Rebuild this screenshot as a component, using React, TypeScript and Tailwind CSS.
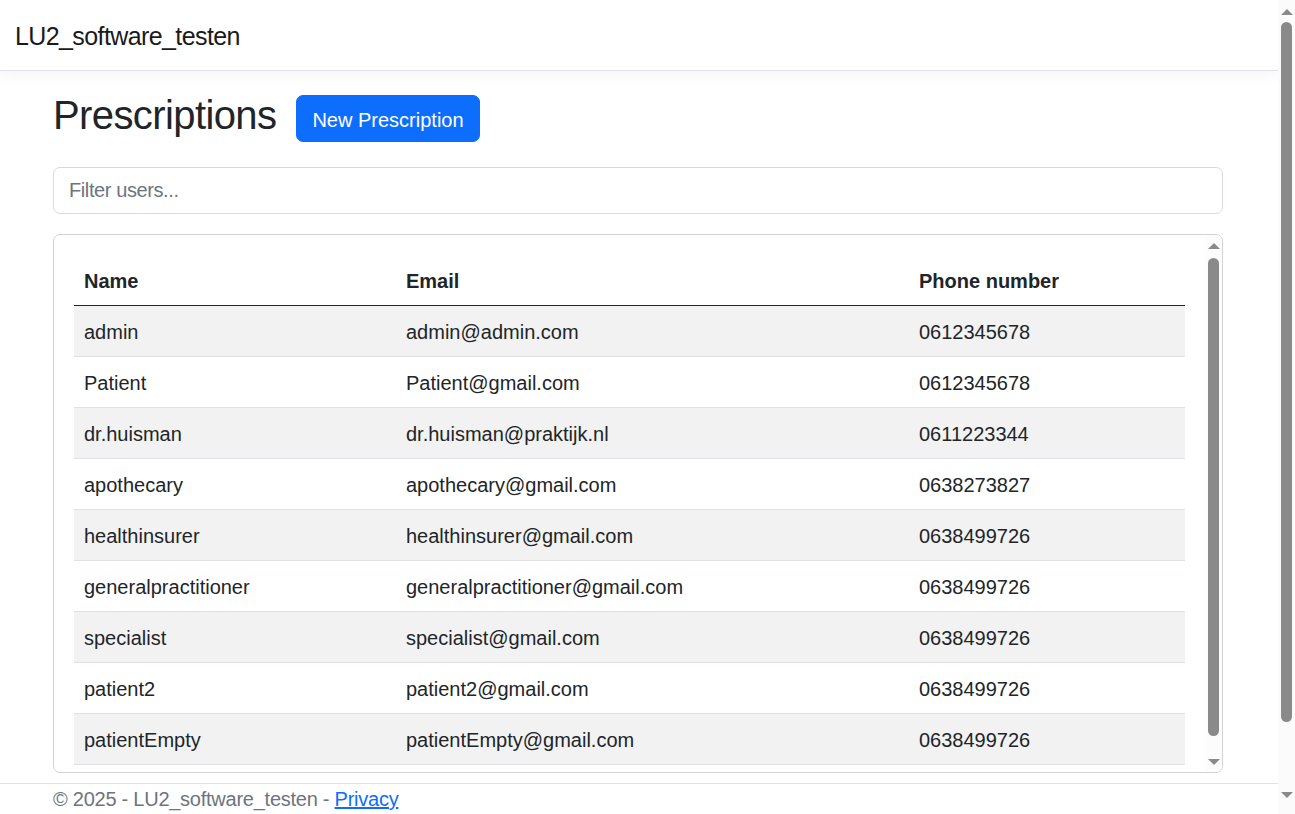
import React from "react";

interface IUser {
  name: string;
  email: string;
  phone: string;
}

const users: IUser[] = [
  { name: "admin", email: "admin@admin.com", phone: "0612345678" },
  { name: "Patient", email: "Patient@gmail.com", phone: "0612345678" },
  { name: "dr.huisman", email: "dr.huisman@praktijk.nl", phone: "0611223344" },
  { name: "apothecary", email: "apothecary@gmail.com", phone: "0638273827" },
  { name: "healthinsurer", email: "healthinsurer@gmail.com", phone: "0638499726" },
  { name: "generalpractitioner", email: "generalpractitioner@gmail.com", phone: "0638499726" },
  { name: "specialist", email: "specialist@gmail.com", phone: "0638499726" },
  { name: "patient2", email: "patient2@gmail.com", phone: "0638499726" },
  { name: "patientEmpty", email: "patientEmpty@gmail.com", phone: "0638499726" },
];

const ArrowUp = () => (
  <div className="w-0 h-0 border-l-[6px] border-r-[6px] border-b-[6px] border-l-transparent border-r-transparent border-b-[#8a8a8a]" />
);

const ArrowDown = () => (
  <div className="w-0 h-0 border-l-[6px] border-r-[6px] border-t-[6px] border-l-transparent border-r-transparent border-t-[#8a8a8a]" />
);

// windows style scrollbars (the browser doesn't draw its own here)
const PageScrollbar = () => (
  <div className="w-[17px] shrink-0 bg-[#fbfbfb] flex flex-col items-center">
    <div className="pt-[9px] h-[17px]">
      <ArrowUp />
    </div>
    <div className="mt-[5px] h-[700px] w-[11px] rounded-full bg-[#8a8a8a]" />
    <div className="mt-auto pb-[16px]">
      <ArrowDown />
    </div>
  </div>
);

const CardScrollbar = () => (
  <div className="w-[17px] shrink-0 bg-[#fcfcfc] flex flex-col items-center">
    <div className="pt-[8px]">
      <ArrowUp />
    </div>
    <div className="mt-[9px] h-[478px] w-[11px] rounded-full bg-[#8a8a8a]" />
    <div className="mt-auto pb-[7px]">
      <ArrowDown />
    </div>
  </div>
);

const App = () => {
  return (
    <div className="flex h-[814px] overflow-hidden bg-white text-[20px] text-[#212529] font-['Liberation_Sans',Arial,sans-serif]">
      <div className="flex-1 min-w-0">
        {/* Navbar */}
        <header className="h-[71px] flex items-center pt-[3px] px-[15px] border-b border-[#dee2e6] shadow-[0_5px_15px_rgba(0,0,0,0.04)]">
          <span className="text-[25px] tracking-[-0.6px] text-[#1a1a1a]">LU2_software_testen</span>
        </header>

        <main className="w-[1170px] ml-[53px] pt-5">
          {/* Title + button */}
          <div className="flex items-center gap-5 h-[54px]">
            <h2 className="text-[40px] leading-[48px] tracking-[-0.6px] font-medium mb-[6px]">Prescriptions</h2>
            <button className="h-[47px] px-[15px] pt-[3px] rounded-[7px] bg-[#0d6efd] text-white text-[20px] border border-[#0d6efd]">
              New Prescription
            </button>
          </div>

          {/* Filter */}
          <input
            type="text"
            placeholder="Filter users..."
            className="mt-[22px] block w-full h-[47px] px-[15px] text-[20px] tracking-[-0.4px] border border-[#d6d9dd] rounded-[7px] outline-none placeholder:text-[#6c757d]"
          />

          {/* Table card */}
          <div className="mt-5 h-[539px] flex overflow-hidden border border-[#d3d3d3] rounded-[7px]">
            <div className="flex-1 min-w-0 p-5">
              <table className="w-full table-fixed border-collapse">
                <colgroup>
                  <col className="w-[322px]" />
                  <col className="w-[513px]" />
                  <col />
                </colgroup>
                <thead>
                  <tr>
                    <th className="text-left font-bold px-[10px] pt-[11px] pb-[9px] leading-[30px] border-b border-[#212529]">Name</th>
                    <th className="text-left font-bold px-[10px] pt-[11px] pb-[9px] leading-[30px] border-b border-[#212529]">Email</th>
                    <th className="text-left font-bold px-[10px] pt-[11px] pb-[9px] leading-[30px] border-b border-[#212529]">Phone number</th>
                  </tr>
                </thead>
                <tbody>
                  {users.map((user, index) => (
                    <tr key={user.email} className={index % 2 === 0 ? "bg-[#f2f2f2]" : "bg-white"}>
                      <td className="px-[10px] pt-[11px] pb-[9px] leading-[30px] border-b border-[#dee2e6]">{user.name}</td>
                      <td className="px-[10px] pt-[11px] pb-[9px] leading-[30px] border-b border-[#dee2e6]">{user.email}</td>
                      <td className="px-[10px] pt-[11px] pb-[9px] leading-[30px] border-b border-[#dee2e6]">{user.phone}</td>
                    </tr>
                  ))}
                </tbody>
              </table>
            </div>
            <CardScrollbar />
          </div>
        </main>

        {/* Footer */}
        <footer className="mt-[10px] border-t border-[#dee2e6]">
          <div className="ml-[53px] leading-[30px] tracking-[-0.25px] text-[#6c757d]">
            © 2025 - LU2_software_testen -{" "}
            <a href="#" className="text-[#0d6efd] underline">
              Privacy
            </a>
          </div>
        </footer>
      </div>
      <PageScrollbar />
    </div>
  );
};

export default App;
